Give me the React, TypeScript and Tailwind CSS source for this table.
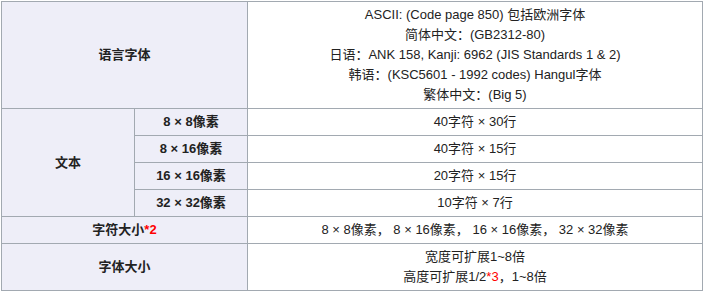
import React from 'react';

const th = 'border border-[#a2a9b1] bg-[#eeeef8] font-bold text-center px-[5px] py-[3px]';
const td = 'border border-[#a2a9b1] bg-white text-center px-[5px] py-[3px]';

const Red: React.FC<{ children: React.ReactNode }> = ({ children }) => (
  <span className="text-[#ff0000]">{children}</span>
);

const textRows = [
  ['8 × 8像素', '40字符 × 30行'],
  ['8 × 16像素', '40字符 × 15行'],
  ['16 × 16像素', '20字符 × 15行'],
  ['32 × 32像素', '10字符 × 7行'],
];

export default function App() {
  return (
    <div className="w-[704px] h-[291px] bg-white pt-px pl-px">
      <table
        className="border-collapse table-fixed w-[702px] text-[13px] leading-[20px] text-[#222222]"
        style={{ fontFamily: '"Liberation Sans", Arial, "Noto Sans CJK SC", sans-serif' }}
      >
        <colgroup>
          <col className="w-[133px]" />
          <col className="w-[113px]" />
          <col />
        </colgroup>
        <tbody>
          <tr>
            <th colSpan={2} className={th}>语言字体</th>
            <td className={td}>
              ASCII: (Code page 850) 包括欧洲字体
              <br />
              简体中文：(GB2312-80)
              <br />
              日语：ANK 158, Kanji: 6962 (JIS Standards 1 &amp; 2)
              <br />
              韩语：(KSC5601 - 1992 codes) Hangul字体
              <br />
              繁体中文：(Big 5)
            </td>
          </tr>
          {textRows.map(([size, grid], i) => (
            <tr key={size}>
              {i === 0 && (
                <th rowSpan={4} className={th}>文本</th>
              )}
              <th className={th}>{size}</th>
              <td className={td}>{grid}</td>
            </tr>
          ))}
          <tr>
            <th colSpan={2} className={th}>
              字符大小<Red>*2</Red>
            </th>
            <td className={td}>8 × 8像素， 8 × 16像素， 16 × 16像素， 32 × 32像素</td>
          </tr>
          <tr>
            <th colSpan={2} className={th}>字体大小</th>
            <td className={td}>
              宽度可扩展1~8倍
              <br />
              高度可扩展1/2<Red>*3</Red>，1~8倍
            </td>
          </tr>
        </tbody>
      </table>
    </div>
  );
}
